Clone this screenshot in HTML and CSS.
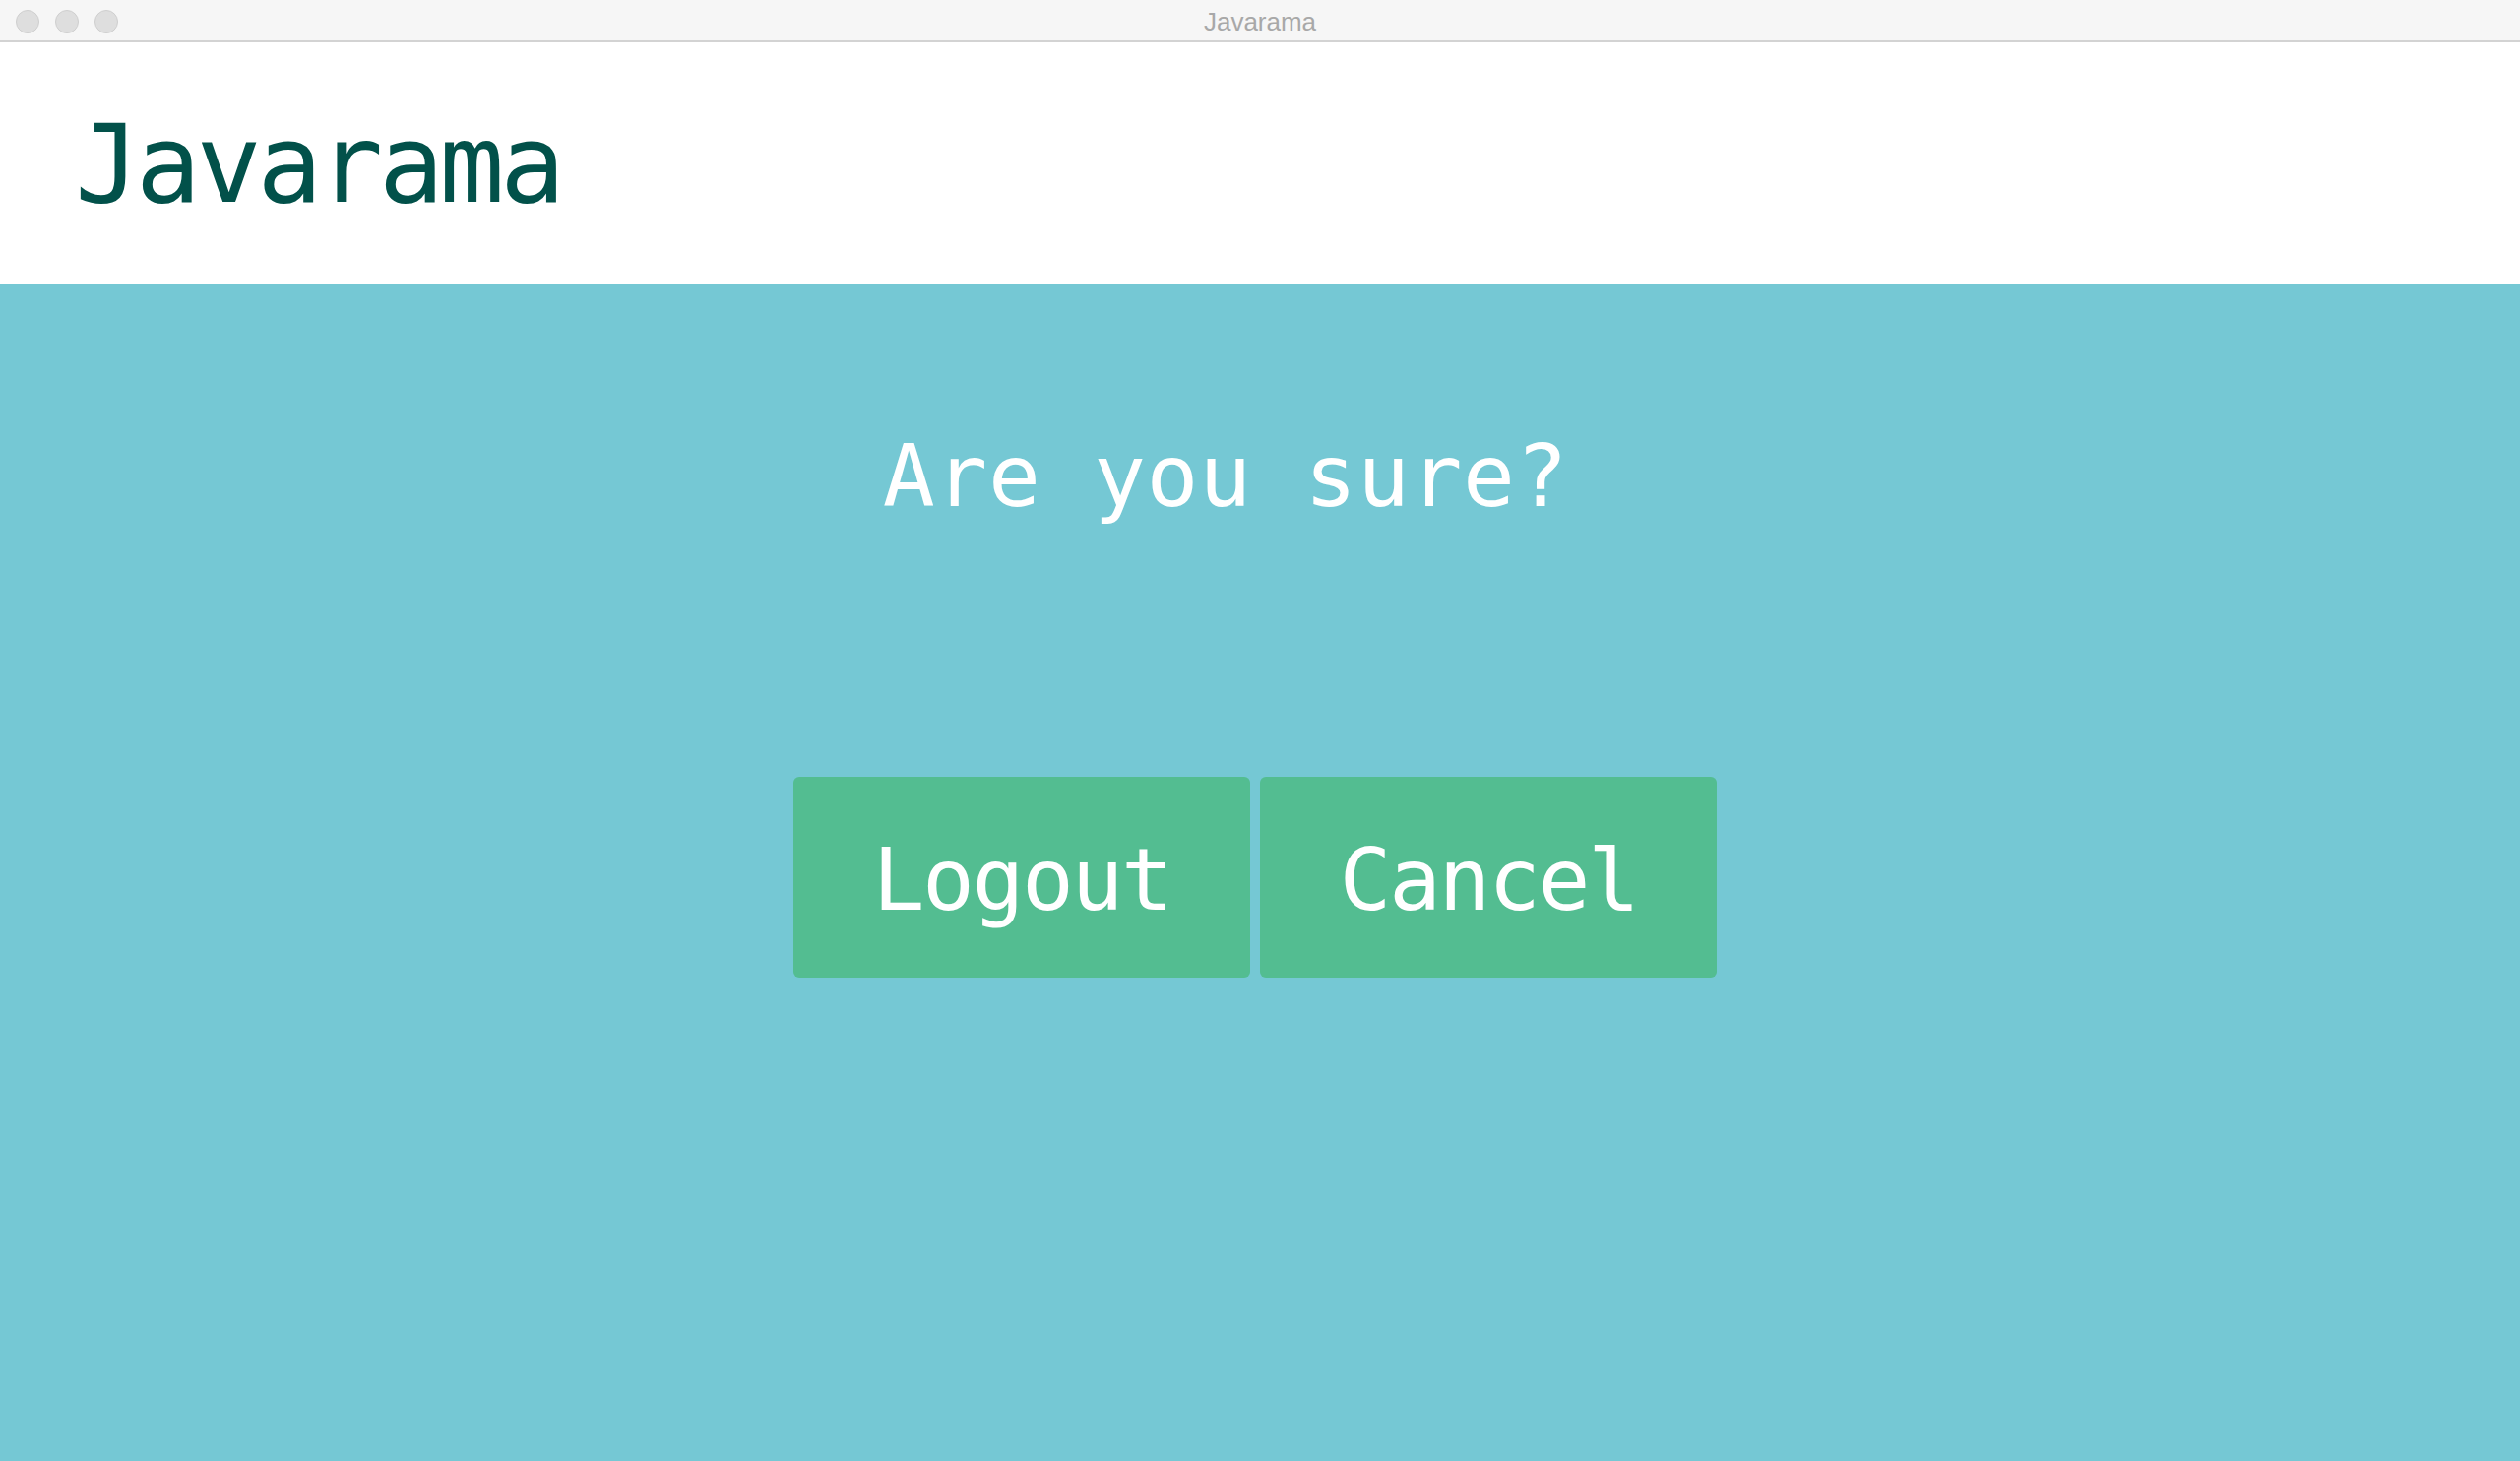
FILE: index.html
```html
<!DOCTYPE html>
<html lang="en">
<head>
<meta charset="utf-8">
<title>Javarama</title>
<link rel="stylesheet" href="styles.css">
</head>
<body>
<div class="window">
  <div class="titlebar">
    <div class="lights">
      <span class="light"></span>
      <span class="light"></span>
      <span class="light"></span>
    </div>
    <div class="title">Javarama</div>
  </div>
  <header class="header">
    <h1 class="logo">Javarama</h1>
  </header>
  <main class="content">
    <h2 class="question">Are you sure?</h2>
    <div class="actions">
      <button class="btn">Logout</button>
      <button class="btn">Cancel</button>
    </div>
  </main>
</div>
</body>
</html>
```
FILE: styles.css
```css
html, body {
  margin: 0;
  padding: 0;
  height: 100%;
}

body {
  font-family: "DejaVu Sans Mono", monospace;
  background: #75c8d4;
}

.window {
  display: flex;
  flex-direction: column;
  min-height: 100vh;
}

.titlebar {
  position: relative;
  height: 41px;
  background: #f6f6f6;
  border-bottom: 2px solid #d3d3d3;
  display: flex;
  align-items: center;
  justify-content: center;
  flex-shrink: 0;
}

.lights {
  position: absolute;
  left: 16px;
  top: 10px;
  display: flex;
  gap: 16px;
}

.light {
  width: 22px;
  height: 22px;
  border-radius: 50%;
  background: #dedede;
  border: 1px solid #cfcfcf;
}

.title {
  font-family: "Liberation Sans", Arial, sans-serif;
  font-size: 26px;
  color: #a8a8a8;
  line-height: 1;
  margin-top: 2px;
}

.header {
  background: #ffffff;
  height: 245px;
  box-sizing: border-box;
  padding: 60px 0 0 76px;
  flex-shrink: 0;
}

.logo {
  margin: 0;
  font-family: "DejaVu Sans Mono", monospace;
  font-weight: normal;
  font-size: 110px;
  letter-spacing: -4.5px;
  line-height: normal;
  color: #02514a;
}

.content {
  flex: 1;
  background: #75c8d4;
  display: flex;
  flex-direction: column;
  align-items: center;
  padding-top: 144px;
}

.question {
  margin: 0 70px 0 0;
  font-family: "DejaVu Sans Mono", monospace;
  font-weight: normal;
  font-size: 88px;
  letter-spacing: 0.6px;
  line-height: normal;
  color: #ffffff;
}

.actions {
  display: flex;
  gap: 10px;
  margin-top: 254px;
  margin-right: 10px;
}

.btn {
  width: 464px;
  height: 204px;
  border: none;
  border-radius: 6px;
  background: #53bd91;
  color: #ffffff;
  font-family: "DejaVu Sans Mono", monospace;
  font-size: 88px;
  letter-spacing: -2.5px;
  padding: 4px 0 0 0;
  cursor: pointer;
}
```
